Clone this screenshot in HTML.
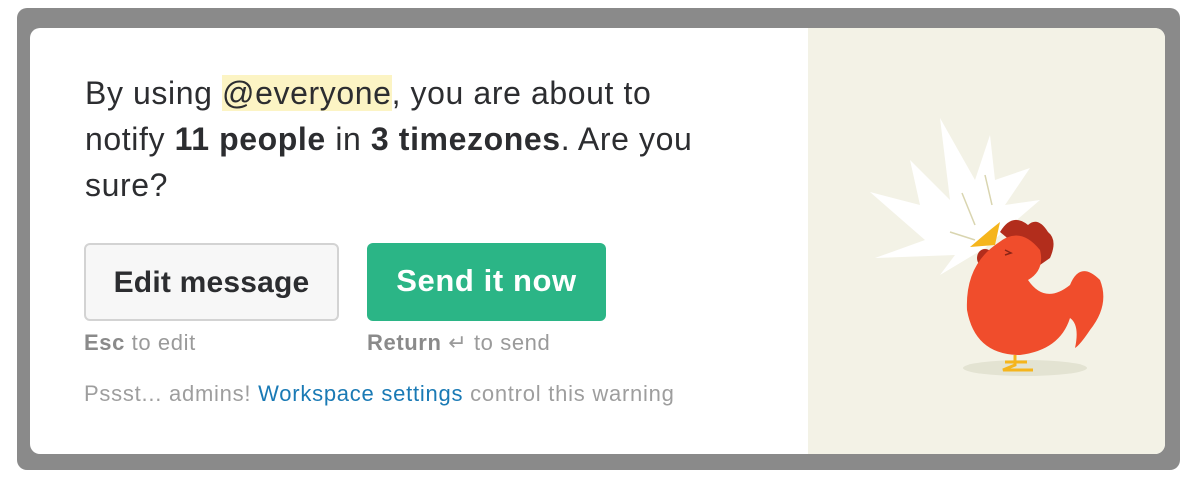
<!DOCTYPE html>
<html><head><style>
html,body{margin:0;padding:0;background:#fff;width:1200px;height:483px;overflow:hidden}
.frame{position:absolute;left:17px;top:8px;width:1163px;height:462px;background:#8a8a8a;border-radius:10px}
.card{position:absolute;left:30px;top:28px;width:1135px;height:426px;background:#fff;border-radius:10px;overflow:hidden;font-family:"Liberation Sans",sans-serif}
.right{position:absolute;left:778px;top:0;width:357px;height:426px;background:#f3f2e6}
.msg{position:absolute;left:55px;top:42px;font-size:32px;line-height:46px;color:#2c2d30;white-space:nowrap;letter-spacing:0.6px}
.hl{background:#fcf4c4}
.btn{position:absolute;top:215px;height:78px;border-radius:6px;font-weight:bold;text-align:center;line-height:76px;box-sizing:border-box}
.b1{left:54px;width:255px;border:2px solid #d3d3d3;background:#f7f7f7;color:#2c2d30;font-size:30px;letter-spacing:0.2px}
.b2{left:337px;width:239px;background:#2bb586;color:#fff;font-size:31px;letter-spacing:0.6px}
.cap{position:absolute;top:302px;font-size:22px;color:#9a9a9a;letter-spacing:0.6px}
.cap b{color:#8a8a8a}
.foot{position:absolute;left:54px;top:353px;font-size:22px;color:#9e9e9e;letter-spacing:0.75px}
.foot span{color:#1a7ab5}
</style></head><body>
<div class="frame"></div>
<div class="card">
<div class="msg">By using <span class="hl">@everyone</span>, you are about to<br>notify <b>11 people</b> in <b>3 timezones</b>. Are you<br>sure?</div>
<div class="btn b1">Edit message</div>
<div class="btn b2">Send it now</div>
<div class="cap" style="left:54px"><b>Esc</b> to edit</div>
<div class="cap" style="left:337px"><b>Return</b> ↵ to send</div>
<div class="foot">Pssst... admins! <span>Workspace settings</span> control this warning</div>
<div class="right">
<svg width="357" height="426" viewBox="808 28 357 426" style="position:absolute;left:0;top:0">
<ellipse cx="1025" cy="368" rx="62" ry="8" fill="#e3e3d2"/>
<polygon fill="#fff" points="985,248 940,275 955,255 875,258 925,240 870,192 920,205 910,160 950,200 940,118 975,180 990,135 995,180 1030,168 1005,205 1040,200 1005,230" />
<path d="M962 193 L975 225 M985 175 L992 205 M950 232 L975 240" stroke="#d9d5b0" stroke-width="1.5"/>
<path d="M990 230 L1000 222 L995 245 L970 247 Z" fill="#f5b51c"/>
<path d="M1000 232 Q1012 212 1028 225 Q1038 216 1048 232 Q1058 240 1050 258 L1040 265 Z" fill="#b22d1c"/>
<ellipse cx="985" cy="258" rx="8" ry="9" fill="#b22d1c"/>
<path d="M998 243 Q1020 225 1040 250 Q1045 270 1028 280 Q1045 305 1070 285 Q1080 260 1100 280 Q1110 305 1090 330 Q1080 345 1075 348 Q1080 325 1070 318 Q1060 350 1020 355 Q975 355 967 310 Q965 265 998 243 Z" fill="#f04d2c"/>
<path d="M1005 250 l6 3 l-6 2" stroke="#8b2416" stroke-width="1.5" fill="none"/>
<path d="M1015 355 l0 10 l-12 5 h30 M1005 362 h22" stroke="#f5b51c" stroke-width="3" fill="none"/>
</svg>
</div>
</div>
</body></html>
